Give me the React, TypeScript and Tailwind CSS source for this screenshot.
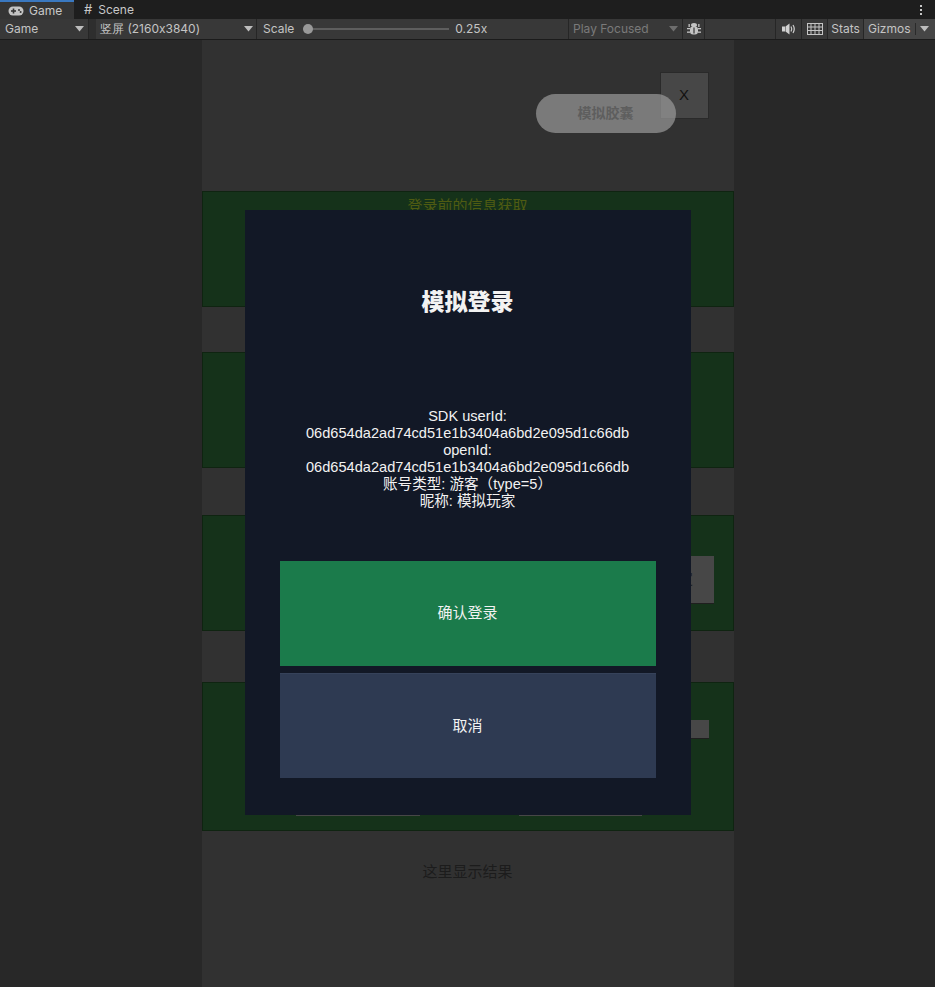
import React from "react";

const Caret = ({ className = "" }: { className?: string }) => (
    <svg width="9" height="6" viewBox="0 0 9 6" className={className}>
        <path d="M0 0 H9 L4.5 5.5 Z" fill="currentColor" />
    </svg>
);

const GamepadIcon = () => (
    <svg width="16" height="10" viewBox="0 0 16 10">
        <rect x="0.5" y="0.5" width="15" height="9" rx="4.5" fill="#c4c4c4" />
        <rect x="3" y="4.2" width="5" height="1.6" fill="#353535" />
        <rect x="4.7" y="2.5" width="1.6" height="5" fill="#353535" />
        <circle cx="11" cy="4" r="1" fill="#353535" />
        <circle cx="12.6" cy="6" r="1" fill="#353535" />
    </svg>
);

const BugIcon = () => (
    <svg width="16" height="16" viewBox="0 0 16 16" fill="#c4c4c4">
        <ellipse cx="8" cy="4" rx="3" ry="2" />
        <rect x="4" y="5.5" width="8" height="8" rx="3" />
        <rect x="1" y="7" width="3" height="1.3" />
        <rect x="12" y="7" width="3" height="1.3" />
        <rect x="1" y="10.5" width="3" height="1.3" />
        <rect x="12" y="10.5" width="3" height="1.3" />
        <rect x="2.5" y="3" width="1.3" height="3" />
        <rect x="12.2" y="3" width="1.3" height="3" />
        <rect x="7.4" y="6.5" width="1.2" height="6" fill="#383838" />
    </svg>
);

const SpeakerIcon = () => (
    <svg width="14" height="12" viewBox="0 0 14 12" fill="#d0d0d0">
        <rect x="0" y="3.5" width="3" height="5" />
        <path d="M3.5 3.5 L7.5 0.5 V11.5 L3.5 8.5 Z" />
        <path d="M9 3.5 Q10.5 6 9 8.5" stroke="#d0d0d0" strokeWidth="1.2" fill="none" />
        <path d="M11 2 Q13.5 6 11 10" stroke="#d0d0d0" strokeWidth="1.2" fill="none" />
    </svg>
);

const KeyboardIcon = () => (
    <svg width="16" height="12" viewBox="0 0 16 12" fill="none" stroke="#c4c4c4" strokeWidth="1">
        <rect x="0.5" y="0.5" width="15" height="11" />
        <path d="M0.5 4 H15.5 M0.5 7.5 H15.5 M4 0.5 V11.5 M8 0.5 V11.5 M12 0.5 V11.5" />
    </svg>
);

const TabBar = () => (
    <div className="h-[19px] bg-[#1e1e1e] flex items-stretch text-[12px] text-[#c8c8c8]">
        <div className="w-[74px] bg-[#353535] border-t-2 border-[#3a78c0] flex items-center gap-[5px] pl-[8px]">
            <GamepadIcon />
            <span>Game</span>
        </div>
        <div className="flex items-center gap-[6px] pl-[10px]">
            <span className="text-[13px] leading-none">#</span>
            <span>Scene</span>
        </div>
        <div className="flex-1" />
        <div className="w-[28px] flex flex-col items-center justify-center gap-[2px]">
            <span className="w-[2px] h-[2px] bg-[#c8c8c8]" />
            <span className="w-[2px] h-[2px] bg-[#c8c8c8]" />
            <span className="w-[2px] h-[2px] bg-[#c8c8c8]" />
        </div>
    </div>
);

const Toolbar = () => (
    <div className="h-[21px] bg-[#383838] border-b border-[#1b1b1b] flex items-stretch text-[12px] text-[#c4c4c4]">
        <div className="w-[89px] flex items-center justify-between pl-[5px] pr-[4px] border-r border-[#262626]">
            <span>Game</span>
            <Caret className="text-[#bdbdbd]" />
        </div>
        <div className="w-[7px] bg-[#2e2e2e]" />
        <div className="w-[161px] flex items-center justify-between pl-[4px] pr-[3px] border-r border-[#262626]">
            <span>竖屏 (2160x3840)</span>
            <Caret className="text-[#bdbdbd]" />
        </div>
        <div className="w-[312px] flex items-center pl-[6px] border-r border-[#262626]">
            <span>Scale</span>
            <div className="relative ml-[9px] w-[146px] h-[10px] flex items-center">
                <div className="w-full h-[2px] bg-[#5e5e5e]" />
                <div className="absolute left-0 w-[10px] h-[10px] rounded-full bg-[#999]" />
            </div>
            <span className="ml-[6px]">0.25x</span>
        </div>
        <div className="w-[114px] flex items-center justify-between pl-[4px] pr-[4px] text-[#7a7a7a] border-r border-[#262626]">
            <span>Play Focused</span>
            <Caret className="text-[#6e6e6e]" />
        </div>
        <div className="w-[22px] flex items-center justify-center border-r border-[#262626]">
            <BugIcon />
        </div>
        <div className="flex-1 border-r border-[#262626]" />
        <div className="w-[26px] flex items-center justify-center border-r border-[#262626]">
            <SpeakerIcon />
        </div>
        <div className="w-[26px] flex items-center justify-center border-r border-[#262626]">
            <KeyboardIcon />
        </div>
        <div className="w-[36px] flex items-center justify-center bg-[#3c3c3c] border-r border-[#262626]">
            Stats
        </div>
        <div className="w-[71px] flex items-center bg-[#464646] pl-[4px]">
            <span>Gizmos</span>
            <span className="ml-[4px] w-px h-[12px] bg-[#2a2a2a]" />
            <Caret className="ml-[4px] text-[#bdbdbd]" />
        </div>
    </div>
);

const Panel = ({ h, children }: { h: string; children?: React.ReactNode }) => (
    <div className={`${h} relative bg-[#15321a] border border-[#0f2411]`}>{children}</div>
);

const LoginModal = () => (
    <div className="absolute left-[43px] top-[170px] w-[446px] h-[605px] bg-[#121826] flex flex-col items-center px-[35px] pt-[76px] pb-[37px] text-[#f2f2f2]">
        <div className="text-[23px] leading-[28px] font-black font-['Noto_Sans_CJK_SC',sans-serif]">
            模拟登录
        </div>
        <div className="mt-[94px] text-[14.6px] leading-[17px] text-center">
            <p>SDK userId:</p>
            <p>06d654da2ad74cd51e1b3404a6bd2e095d1c66db</p>
            <p>openId:</p>
            <p>06d654da2ad74cd51e1b3404a6bd2e095d1c66db</p>
            <p>账号类型: 游客（type=5）</p>
            <p>昵称: 模拟玩家</p>
        </div>
        <div className="mt-auto w-full flex flex-col gap-[7px]">
            <button className="h-[105px] w-full bg-[#1b7b4b] text-[15px]">确认登录</button>
            <button className="h-[105px] w-full bg-[#2e3a52] border-t border-[#36425a] text-[15px]">取消</button>
        </div>
    </div>
);

export default function App() {
    return (
        <div className="w-[935px] h-[987px] bg-[#282828] flex flex-col overflow-hidden font-['Inter','Liberation_Sans',sans-serif]">
            <TabBar />
            <Toolbar />
            <div className="flex-1 flex justify-center">
                <div className="relative w-[532px] bg-[#313131] flex flex-col font-['Liberation_Sans','Noto_Sans_CJK_SC',sans-serif]">
                    {/* header: capsule + close */}
                    <div className="h-[151px] relative">
                        <div className="absolute left-[458px] top-[32px] w-[49px] h-[47px] bg-[#474747] border border-[#2a2a2a] flex items-center justify-center text-[15px] text-[#111]">
                            X
                        </div>
                        <div className="absolute left-[334px] top-[54px] w-[140px] h-[39px] rounded-full bg-[#9a9a9a]/70 flex items-center justify-center text-[14px] font-bold text-[#5e5e5e]">
                            模拟胶囊
                        </div>
                    </div>

                    <Panel h="h-[116px]">
                        <p className="text-center text-[15px] leading-[18px] mt-[5px] text-[#4f5b12]">登录前的信息获取</p>
                    </Panel>
                    <div className="h-[45px]" />
                    <Panel h="h-[116px]" />
                    <div className="h-[47px]" />
                    <Panel h="h-[116px]">
                        <div className="absolute left-[440px] top-[40px] w-[71px] h-[48px] bg-[#474747] border-b border-[#1f1f1f] flex items-center justify-center text-[15px] text-[#222]">
                            确定
                        </div>
                    </Panel>
                    <div className="h-[51px]" />
                    <Panel h="h-[149px]">
                        <div className="absolute left-[360px] top-[37px] w-[146px] h-[19px] bg-[#474747] border-b border-[#1f1f1f]" />
                        <div className="absolute left-[93px] top-[86px] w-[124px] h-[47px] bg-[#474747]" />
                        <div className="absolute left-[316px] top-[86px] w-[123px] h-[47px] bg-[#474747]" />
                    </Panel>
                    <p className="mt-[32px] text-center text-[15px] leading-[18px] text-[#1c1c1c]">这里显示结果</p>

                    <LoginModal />
                </div>
            </div>
        </div>
    );
}
